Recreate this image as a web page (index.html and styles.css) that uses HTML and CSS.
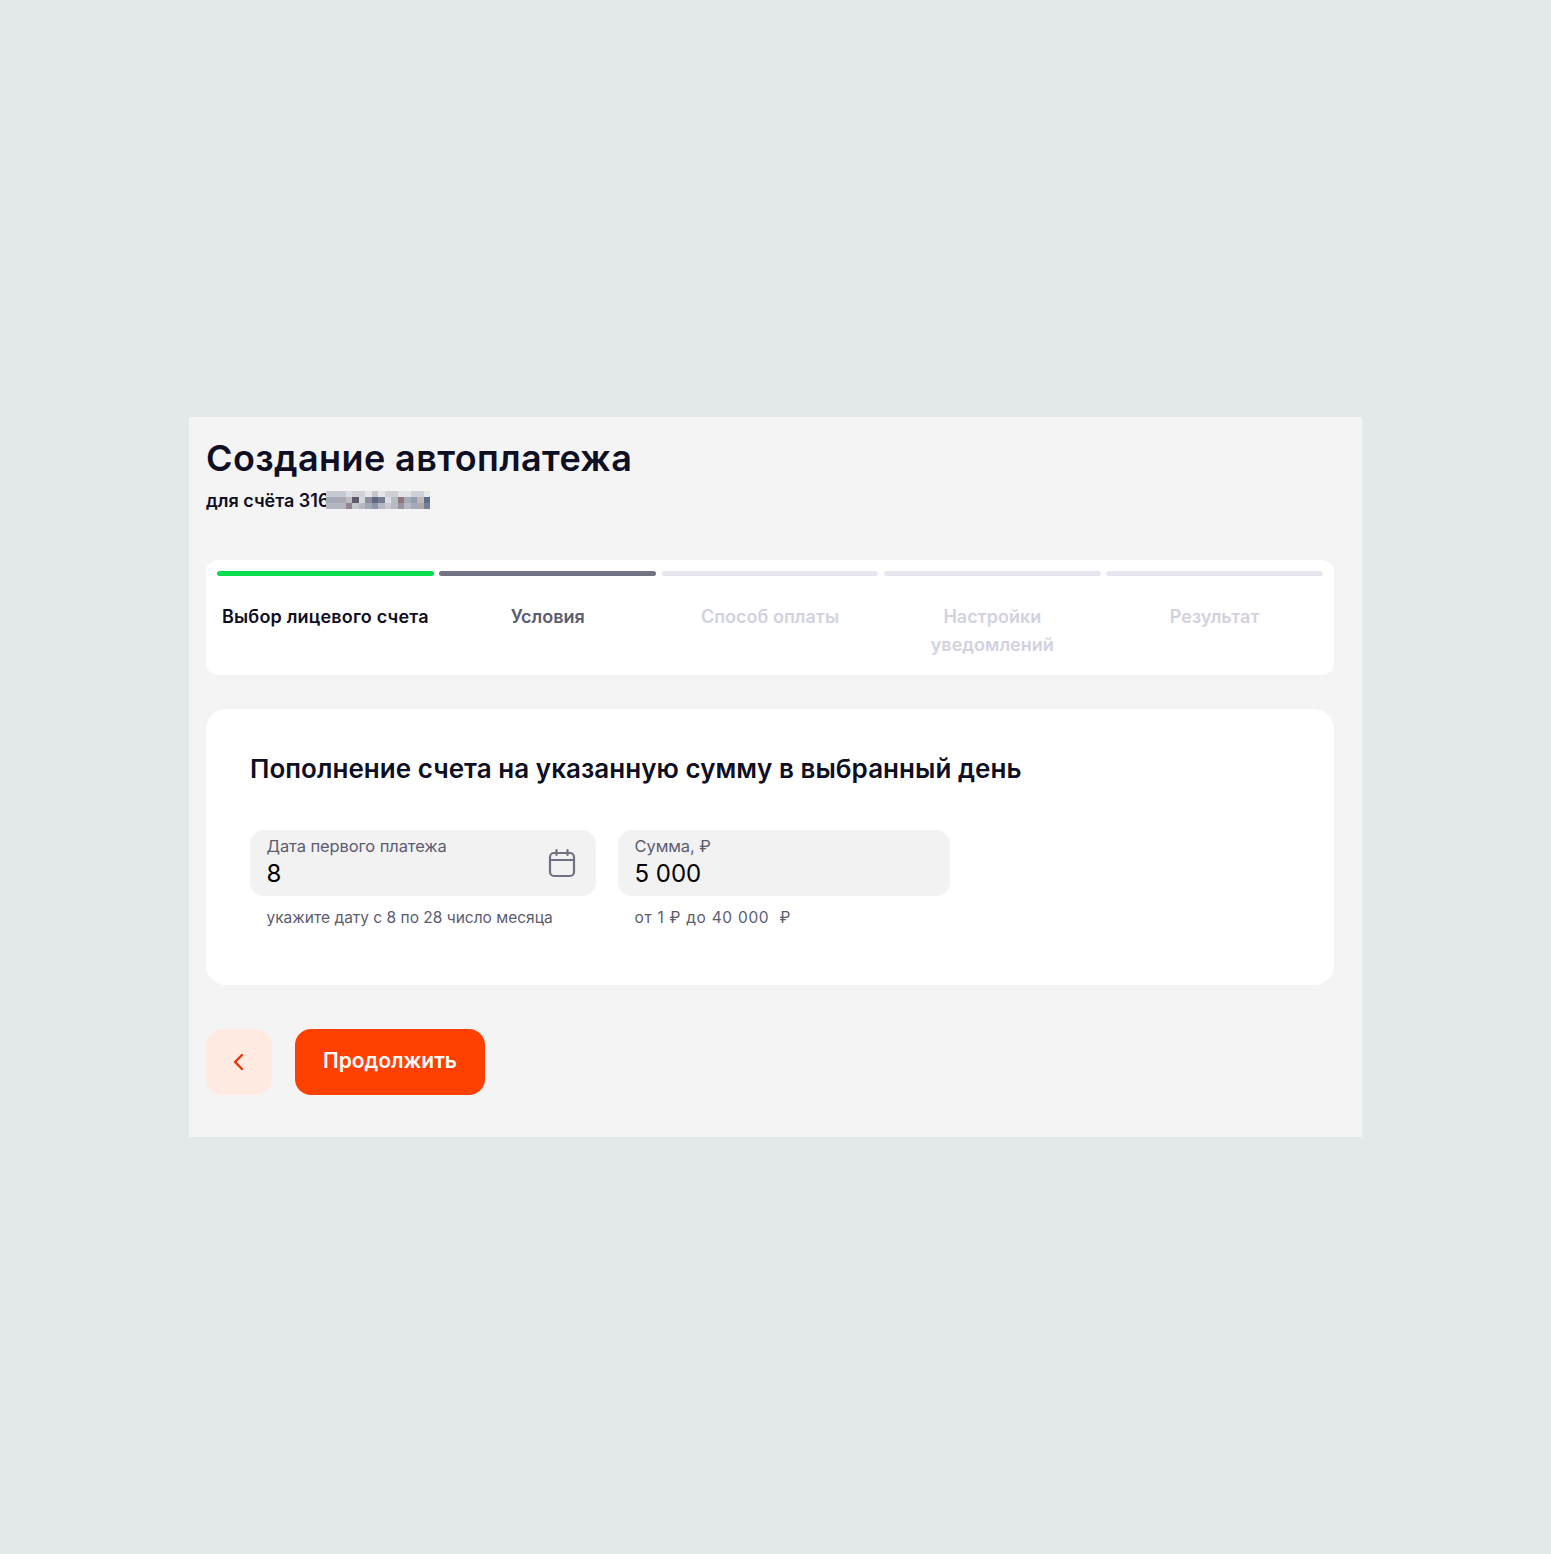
FILE: index.html
```html
<!DOCTYPE html>
<html lang="ru">
<head>
    <meta charset="utf-8">
    <title>Создание автоплатежа</title>
    <link rel="stylesheet" href="styles.css">
</head>
<body>
    <div class="panel">
        <h1 class="title">Создание автоплатежа</h1>
        <div class="account">
            <span>для счёта 316</span>
            <svg class="mosaic" width="104" height="18" viewBox="0 0 16 3" preserveAspectRatio="none" shape-rendering="crispEdges">
                <rect width="16" height="3" fill="#b6b9c4"/>
                <rect x="0" y="0" width="3" height="1" fill="#c6cad2"/>
                <rect x="3" y="0" width="1" height="1" fill="#dcdde2"/>
                <rect x="4" y="0" width="2" height="1" fill="#d0d2d8"/>
                <rect x="6" y="0" width="1" height="1" fill="#e4e6ea"/>
                <rect x="7" y="0" width="1" height="1" fill="#c4c6d0"/>
                <rect x="8" y="0" width="1" height="1" fill="#e6e6ea"/>
                <rect x="9" y="0" width="2" height="1" fill="#d0cfd4"/>
                <rect x="11" y="0" width="2" height="1" fill="#e2e4e8"/>
                <rect x="13" y="0" width="2" height="1" fill="#cdd1d8"/>
                <rect x="15" y="0" width="1" height="1" fill="#e4e6ea"/>
                <rect x="0" y="1" width="3" height="1" fill="#a7a9b6"/>
                <rect x="3" y="1" width="1" height="1" fill="#c2bcc0"/>
                <rect x="4" y="1" width="1" height="1" fill="#5f5a70"/>
                <rect x="5" y="1" width="1" height="1" fill="#d3d8da"/>
                <rect x="6" y="1" width="1" height="1" fill="#8f8a9c"/>
                <rect x="7" y="1" width="1" height="1" fill="#5e6a82"/>
                <rect x="8" y="1" width="1" height="1" fill="#747c90"/>
                <rect x="9" y="1" width="1" height="1" fill="#dcdde2"/>
                <rect x="10" y="1" width="1" height="1" fill="#b8bcc4"/>
                <rect x="11" y="1" width="1" height="1" fill="#8d7680"/>
                <rect x="12" y="1" width="1" height="1" fill="#a8aab4"/>
                <rect x="13" y="1" width="1" height="1" fill="#8f9eb2"/>
                <rect x="14" y="1" width="1" height="1" fill="#c4b8b4"/>
                <rect x="15" y="1" width="1" height="1" fill="#5f6d8c"/>
                <rect x="0" y="2" width="3" height="1" fill="#b4b6c0"/>
                <rect x="3" y="2" width="1" height="1" fill="#94848f"/>
                <rect x="4" y="2" width="1" height="1" fill="#c4c6cc"/>
                <rect x="6" y="2" width="1" height="1" fill="#a0a8b4"/>
                <rect x="7" y="2" width="1" height="1" fill="#8d95a8"/>
                <rect x="9" y="2" width="1" height="1" fill="#c8cad0"/>
                <rect x="11" y="2" width="1" height="1" fill="#9a939c"/>
                <rect x="13" y="2" width="1" height="1" fill="#a0aab8"/>
                <rect x="14" y="2" width="1" height="1" fill="#b0a8a4"/>
                <rect x="15" y="2" width="1" height="1" fill="#74809a"/>
            </svg>
        </div>

        <div class="steps">
            <div class="step step-done">
                <div class="step-bar"></div>
                <div class="step-label">Выбор лицевого счета</div>
            </div>
            <div class="step step-current">
                <div class="step-bar"></div>
                <div class="step-label">Условия</div>
            </div>
            <div class="step">
                <div class="step-bar"></div>
                <div class="step-label">Способ оплаты</div>
            </div>
            <div class="step">
                <div class="step-bar"></div>
                <div class="step-label">Настройки уведомлений</div>
            </div>
            <div class="step">
                <div class="step-bar"></div>
                <div class="step-label">Результат</div>
            </div>
        </div>

        <div class="card">
            <h2 class="card-title">Пополнение счета на указанную сумму в выбранный день</h2>
            <div class="fields">
                <div class="field field-date">
                    <div class="field-box">
                        <div>
                            <div class="field-label">Дата первого платежа</div>
                            <div class="field-value">8</div>
                        </div>
                        <svg class="calendar" width="28" height="30" viewBox="0 0 28 30" fill="none" stroke="#6f7080" stroke-width="2.200" stroke-linecap="round">
                            <rect x="2" y="5" width="24" height="23" rx="4"/>
                            <path d="M2 12H26M8.500 2V7M19.500 2V7"/>
                        </svg>
                    </div>
                    <div class="field-hint">укажите дату с 8 по 28 число месяца</div>
                </div>
                <div class="field field-sum">
                    <div class="field-box">
                        <div>
                            <div class="field-label">Сумма, ₽</div>
                            <div class="field-value">5 000</div>
                        </div>
                    </div>
                    <div class="field-hint">от 1 ₽ до 40 000&nbsp; ₽</div>
                </div>
            </div>
        </div>

        <div class="actions">
            <button class="btn-back" type="button">
                <svg width="12" height="18" viewBox="0 0 12 18" fill="none" stroke="#f0320a" stroke-width="2.400" stroke-linecap="round" stroke-linejoin="round">
                    <path d="M10 2L3 9L10 16"/>
                </svg>
            </button>
            <button class="btn-next" type="button">Продолжить</button>
        </div>
    </div>
</body>
</html>
```

FILE: styles.css
```css
*{
    margin: 0;
    padding: 0;
    box-sizing: border-box;
    font-family: Inter, "Noto Sans", sans-serif;
}

body{
    background: #e3e8eb;
    min-height: 100vh;
    display: flex;
    align-items: center;
    justify-content: center;
    color: #0e0e24;
}

.panel{
    width: 1173px;
    height: 720px;
    background: #f4f4f4;
    padding: 17px 28px 0 17px;
}

.title{
    font-size: 36px;
    font-weight: 600;
    line-height: 48px;
    letter-spacing: 0.4px;
}

.account{
    display: flex;
    align-items: center;
    height: 24px;
    margin-top: 6px;
    font-size: 18px;
    font-weight: 600;
}

.mosaic{
    margin-left: -3px;
}

.steps{
    display: flex;
    gap: 5.500px;
    height: 115px;
    margin-top: 48px;
    padding: 11px;
    background: #fff;
    border-radius: 12px;
}

.step{
    flex: 1;
    text-align: center;
}

.step-bar{
    height: 5px;
    border-radius: 3px;
    background: #e6e6ee;
}

.step-label{
    margin-top: 27px;
    padding: 0 16px;
    font-size: 18px;
    font-weight: 600;
    line-height: 28px;
    color: #d2d2de;
}

.step-done .step-bar{
    background: #08dd4f;
}

.step-done .step-label{
    padding: 0;
    letter-spacing: 0.2px;
    color: #0e0e24;
}

.step-current .step-bar{
    background: #737386;
}

.step-current .step-label{
    color: #5c5c70;
}

.card{
    height: 276px;
    margin-top: 34px;
    padding: 42px 44px 0;
    background: #fff;
    border-radius: 20px;
}

.card-title{
    font-size: 26px;
    font-weight: 600;
    line-height: 36px;
    letter-spacing: 0.04px;
}

.fields{
    display: flex;
    gap: 22px;
    margin-top: 43px;
}

.field-date{
    width: 346px;
}

.field-sum{
    width: 332px;
}

.field-box{
    display: flex;
    justify-content: space-between;
    align-items: center;
    height: 66px;
    padding: 0 20px 0 16.500px;
    background: #f2f2f2;
    border-radius: 14px;
}

.field-label{
    margin-top: -3px;
    font-size: 16.500px;
    line-height: 22px;
    letter-spacing: -0.1px;
    color: #5c5c70;
}

.field-value{
    margin-top: 2px;
    font-size: 24px;
    line-height: 30px;
    color: #000;
}

.field-hint{
    margin-top: 11px;
    padding-left: 16.500px;
    font-size: 15.500px;
    line-height: 22px;
    color: #5c5c70;
}

.field-sum .field-hint{
    letter-spacing: 0.7px;
}

.actions{
    display: flex;
    gap: 23px;
    margin-top: 44px;
}

.actions button{
    height: 66px;
    border: 0;
    border-radius: 16px;
    cursor: pointer;
}

.btn-back{
    width: 66px;
    padding: 2px 2px 0 0;
    background: #ffebe2;
}

.btn-next{
    width: 190px;
    padding-bottom: 3px;
    background: #ff4000;
    color: #fff;
    font-size: 21px;
    font-weight: 600;
}
```
